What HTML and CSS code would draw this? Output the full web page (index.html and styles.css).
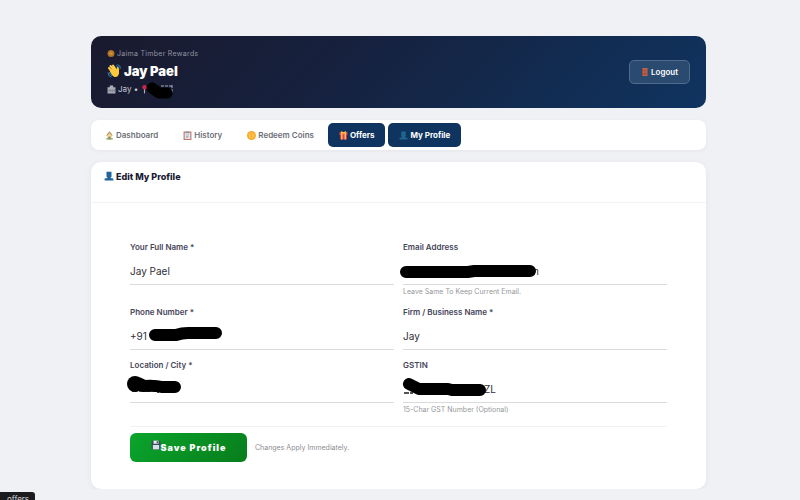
FILE: index.html
```html
<!DOCTYPE html>
<html lang="en">
<head>
<meta charset="utf-8">
<title>My Profile</title>
<link rel="stylesheet" href="styles.css">
</head>
<body>
<header class="hero">
  <div class="hero-info">
    <p class="brand">
      <svg class="icon-s" viewBox="0 0 16 16" aria-hidden="true"><circle cx="8" cy="7" r="7" fill="#a96f25"/><circle cx="8" cy="7" r="4" fill="#c98c36"/></svg>
      Jaima Timber Rewards
    </p>
    <h1>
      <svg class="icon-l" viewBox="0 0 28 28" aria-hidden="true"><path d="M18 3q6 1 6 8M21 1q6 2 6 8M2 17q0 8 7 9M5 16q0 6 5 7" fill="none" stroke="#2d86b5" stroke-width="2"/><path d="M4 8l7 8M7 4l8 9M12 3l7 10" stroke="#ffd152" stroke-width="4" stroke-linecap="round"/><path d="M5 13l9-5 5 4 1-6q4 0 4 6v7q-2 8-9 7-5-2-10-13z" fill="#ffc83d"/></svg>
      Jay Pael
    </h1>
    <p class="meta">
      <svg class="icon-m" viewBox="0 0 16 16" aria-hidden="true"><path d="M1 4h4V1h6v3h4v11H1z" fill="#aab0b8"/><path d="M4 7v6M7 7v6M10 7v6M13 7v6M1 10h14" stroke="#6e7889"/></svg>
      <span>Jay •</span>
      <svg class="icon-m" viewBox="0 0 16 16" aria-hidden="true"><path d="M8 6v9" stroke="#a8adbd" stroke-width="2"/><circle cx="8" cy="4" r="4" fill="#cf2449"/></svg>
      <svg class="mark mark-city" viewBox="0 0 34 20" aria-hidden="true"><path d="M17 6h12M18 8v3M22 8v3M28 5v7" stroke="#a8adbb" stroke-dasharray="3 1"/><path d="M8 8l7 5h8" fill="none" stroke="#000" stroke-width="11" stroke-linecap="round" stroke-linejoin="round"/></svg>
    </p>
  </div>
  <button class="logout" type="button">
    <svg class="icon-s" viewBox="0 0 16 16" aria-hidden="true"><path d="M3 0h10v16H3z" fill="#c76343"/><path d="M5 3h6v4H5zM5 9h6v5H5z" fill="#a94e39"/></svg>
    Logout
  </button>
</header>

<nav class="tabs">
  <a href="#dashboard"><svg class="icon-m" viewBox="0 0 16 16" aria-hidden="true"><path d="M4 7h8v8H4z" fill="#ecd99b"/><path d="M3 8l5-6 5 6" fill="#ecd99b" stroke="#c08b58" stroke-width="2"/><path d="M6 10h4v5H6z" fill="#9b7b5c"/><path d="M2 14h12" stroke="#79a869" stroke-width="2"/></svg>Dashboard</a>
  <a href="#history"><svg class="icon-m" viewBox="0 0 16 16" aria-hidden="true"><path d="M2 2h12v13H2z" fill="#e8eaf0" stroke="#bd7769" stroke-width="2"/><path d="M5 1h6v3H5z" fill="#8a95a3"/><path d="M5 7h6M5 10h6M5 12h4" stroke="#8393a8"/></svg>History</a>
  <a href="#redeem"><svg class="icon-m" viewBox="0 0 16 16" aria-hidden="true"><circle cx="8" cy="8" r="8" fill="#f9ab2e"/><circle cx="8" cy="8" r="5" fill="#ffc14b"/><path d="M8 5v6" stroke="#f7aa2c" stroke-width="2"/></svg>Redeem Coins</a>
  <a class="active" href="#offers"><svg class="icon-m" viewBox="0 0 16 16" aria-hidden="true"><path d="M2 6h12v9H2z" fill="#e8432f"/><path d="M1 2h14v5H1z" fill="#f05a36"/><path d="M5 2v13M11 2v13" stroke="#ffd78a" stroke-width="2"/><path d="M8 4L4 1M8 4l4-3" stroke="#ffc149" stroke-width="2"/></svg>Offers</a>
  <a class="active" href="#profile"><svg class="icon-m" viewBox="0 0 16 16" aria-hidden="true"><path d="M4 1h8v8l-2 2 5 1v3H1v-3l5-1-2-2z" fill="#1f668f"/></svg>My Profile</a>
</nav>

<main class="card">
  <h2><svg class="icon-p" viewBox="0 0 16 16" aria-hidden="true"><path d="M4 1h8v8l-2 2 5 1v3H1v-3l5-1-2-2z" fill="#22659c"/></svg>Edit My Profile</h2>
  <form>
    <div class="fields">
      <div class="field">
        <label for="name">Your Full Name *</label>
        <input id="name" type="text" value="Jay Pael">
      </div>
      <div class="field">
        <label for="email">Email Address</label>
        <input id="email" class="tail" type="text" value="n">
        <svg class="mark mark-email" viewBox="0 0 144 20" aria-hidden="true"><path d="M10 11h62l6-1h56" fill="none" stroke="#000" stroke-width="12" stroke-linecap="round"/></svg>
        <small>Leave Same To Keep Current Email.</small>
      </div>
      <div class="field">
        <label for="phone">Phone Number *</label>
        <input id="phone" type="text" value="+91">
        <svg class="mark mark-phone" viewBox="0 0 80 20" aria-hidden="true"><path d="M48 15h22" stroke="#555" stroke-width="2" stroke-dasharray="4 2"/><path d="M10 12h21q6-2 12-2h28" fill="none" stroke="#000" stroke-width="12" stroke-linecap="round"/></svg>
      </div>
      <div class="field">
        <label for="firm">Firm / Business Name *</label>
        <input id="firm" type="text" value="Jay">
      </div>
      <div class="field">
        <label for="city">Location / City *</label>
        <input id="city" type="text">
        <svg class="mark mark-location" viewBox="0 0 62 24" aria-hidden="true"><path d="M8 17h28M34 16v3" stroke="#555" stroke-dasharray="5 2" stroke-width="2"/><path d="M11 10q4-2 8 2 12-1 19 1h13" fill="none" stroke="#000" stroke-width="12" stroke-linecap="round" stroke-linejoin="round"/><circle cx="11" cy="10" r="8"/></svg>
      </div>
      <div class="field">
        <label for="gstin">GSTIN</label>
        <input id="gstin" class="suffix" type="text" value="ZL">
        <svg class="mark mark-gst" viewBox="0 0 92 24" aria-hidden="true"><path d="M5 18h9" stroke="#555" stroke-width="2" stroke-dasharray="5 1"/><path d="M10 9l10 5h29l4 1h28" fill="none" stroke="#000" stroke-width="12" stroke-linecap="round" stroke-linejoin="round"/></svg>
        <small>15-Char GST Number (Optional)</small>
      </div>
    </div>
    <div class="actions">
      <button class="save" type="button"><svg class="icon-f" viewBox="0 0 16 16" aria-hidden="true"><path d="M1 1h13l1 2v12H1z" fill="#394957"/><path d="M4 1h8v5H4z" fill="#e8edf2"/><path d="M9 2h2v3H9z" fill="#394957"/><path d="M3 8h10v7H3z" fill="#d6dfe8"/></svg>Save Profile</button>
      <span>Changes Apply Immediately.</span>
    </div>
  </form>
</main>
<div class="status">offers</div>
</body>
</html>
```
FILE: styles.css
```css
* { box-sizing: border-box; }
body {
  margin: 0;
  padding: 36px 94px 0 91px;
  background: #eff1f5;
  color: #1b1b35;
  font-family: Inter, "Liberation Sans", sans-serif;
  font-size: 8px;
}
h1, h2, p { margin: 0; }
svg { flex: none; }
button, input { font-family: inherit; }
.icon-s { width: 8px; height: 8px; }
.icon-m { width: 9px; height: 9px; }
.icon-p { width: 10px; height: 10px; }
.icon-f { width: 10px; height: 10px; margin-bottom: 5px; }
.icon-l { width: 14px; height: 14px; }

.hero {
  display: flex;
  align-items: center;
  justify-content: space-between;
  height: 72px;
  padding: 0 16px;
  border-radius: 10px;
  background: linear-gradient(135deg, #1a1a2e 0%, #16213e 40%, #0f3460 100%);
  color: #fff;
}
.brand, .meta, .hero h1 { display: flex; align-items: center; }
.brand { gap: 2px; line-height: 12px; font-size: 7px; letter-spacing: 0.3px; color: #9094a3; }
.hero h1 { gap: 3px; line-height: 22px; font-size: 13px; font-weight: 900; }
.meta { position: relative; gap: 2px; line-height: 14px; font-size: 8px; color: #c6c9d2; }
.logout {
  display: flex;
  align-items: center;
  justify-content: center;
  gap: 2px;
  width: 61px;
  height: 24px;
  padding: 0;
  border: 1px solid #506b8b;
  border-radius: 5px;
  background: #2b4a70;
  color: #fff;
  font-size: 8px;
  font-weight: 600;
}

.tabs {
  display: flex;
  align-items: center;
  gap: 3px;
  margin-top: 12px;
  padding: 3px;
  border-radius: 8px;
  background: #fff;
  box-shadow: 0 1px 4px #1a1a2e0d;
}
.tabs a {
  display: flex;
  align-items: center;
  gap: 2px;
  height: 24px;
  padding: 0 11px;
  border-radius: 5px;
  color: #6d6f76;
  font-size: 8px;
  font-weight: 600;
  text-decoration: none;
}
.tabs .active { background: #0f3460; color: #fff; font-weight: 700; }

.card {
  margin-top: 12px;
  border-radius: 10px;
  background: #fff;
  box-shadow: 0 1px 6px #1a1a2e0f;
}
.card h2 {
  display: flex;
  align-items: flex-start;
  gap: 2px;
  height: 41px;
  padding: 9px 13px;
  border-bottom: 1px solid #f2f3f5;
  font-size: 9px;
  line-height: 12px;
  font-weight: 800;
}
form { padding: 38px 39px 27px; }
.fields { display: grid; grid-template-columns: 1fr 1fr; gap: 9px; }
.field { position: relative; display: flex; flex-direction: column; }
label { margin-bottom: 5px; line-height: 12px; font-size: 8px; font-weight: 600; color: #454558; }
input {
  width: 100%;
  height: 27px;
  padding: 0;
  border: 0;
  border-bottom: 1px solid #d9dadd;
  background: none;
  color: #303038;
  font-size: 10px;
  outline: 0;
}
.tail { padding-left: 130px; }
.suffix { padding-left: 81px; }
small { line-height: 13px; margin-bottom: -1px; font-size: 7px; color: #96979b; }
.mark { position: absolute; }
.mark-city { left: 37px; top: -2px; width: 34px; height: 20px; }
.mark-email { left: -7px; top: 20px; width: 144px; height: 20px; }
.mark-phone { left: 15px; top: 17px; width: 80px; height: 20px; }
.mark-location { left: -6px; top: 15px; width: 62px; height: 24px; }
.mark-gst { left: -4px; top: 16px; width: 92px; height: 24px; }

.actions {
  display: flex;
  align-items: center;
  gap: 8px;
  margin-top: 11px;
  padding-top: 6px;
  border-top: 1px solid #f1f1f3;
  color: #8c8d91;
  font-size: 7px;
}
.save {
  display: flex;
  align-items: center;
  justify-content: center;
  width: 117px;
  height: 29px;
  padding: 0;
  border: 0;
  border-radius: 6px;
  background: linear-gradient(135deg, #0aa52c, #087d1c);
  color: #fff;
  font-size: 9px;
  font-weight: 900;
  letter-spacing: 1px;
}
.status {
  position: fixed;
  left: 0;
  bottom: 0;
  width: 35px;
  height: 8px;
  padding-left: 7px;
  overflow: hidden;
  border-radius: 0 3px 0 0;
  background: #1c1c1e;
  color: #d0d0d2;
  font-size: 8px;
  line-height: 14px;
}
```
